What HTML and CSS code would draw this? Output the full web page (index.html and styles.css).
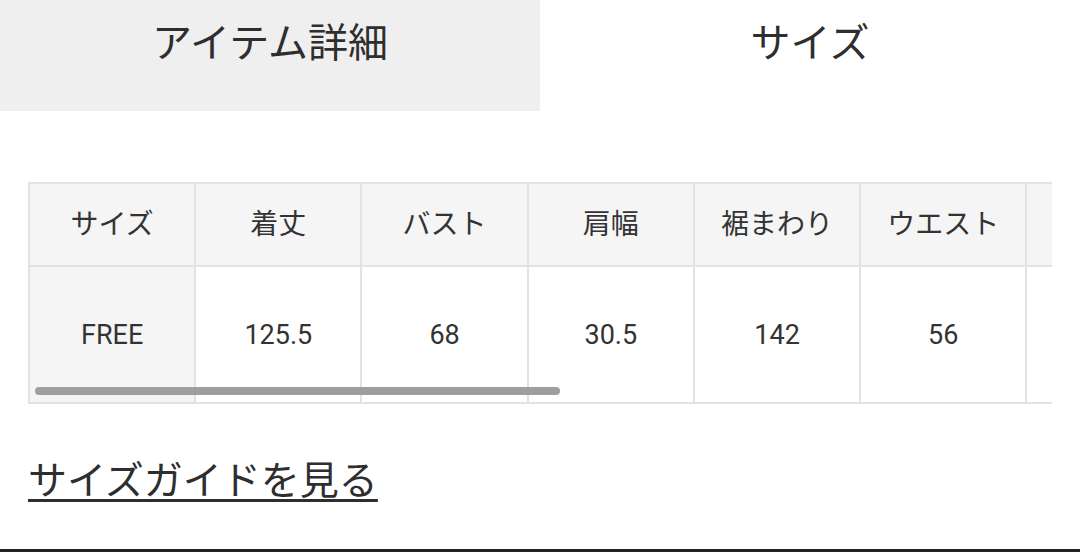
FILE: index.html
```html
<!DOCTYPE html>
<html lang="ja">
<head>
<meta charset="utf-8">
<link rel="stylesheet" href="styles.css">
</head>
<body>
<div class="page">
  <div class="tabs">
    <div class="tab tab-inactive">アイテム詳細</div>
    <div class="tab tab-active">サイズ</div>
  </div>
  <div class="content">
    <div class="table-wrap">
      <div class="scroller">
        <table class="size-table">
          <thead>
            <tr>
              <th class="first">サイズ</th>
              <th>着丈</th>
              <th>バスト</th>
              <th>肩幅</th>
              <th>裾まわり</th>
              <th>ウエスト</th>
              <th>&nbsp;</th>
              <th>&nbsp;</th>
            </tr>
          </thead>
          <tbody>
            <tr>
              <td class="first">FREE</td>
              <td>125.5</td>
              <td>68</td>
              <td>30.5</td>
              <td>142</td>
              <td>56</td>
              <td>&nbsp;</td>
              <td>&nbsp;</td>
            </tr>
          </tbody>
        </table>
      </div>
      <div class="scrollbar"></div>
    </div>
    <a class="guide-link" href="#">サイズガイドを見る</a>
  </div>
  <div class="bottom-line"></div>
</div>
</body>
</html>
```

FILE: styles.css
```css
* { box-sizing: border-box; }
html, body {
  margin: 0;
  padding: 0;
  background: #ffffff;
}
body {
  font-family: "Noto Sans CJK JP", "Noto Sans", sans-serif;
  color: #333333;
  width: 1080px;
  height: 552px;
  overflow: hidden;
}
.page {
  width: 1080px;
  height: 552px;
  display: flex;
  flex-direction: column;
}
.tabs {
  display: flex;
  height: 111px;
  flex: none;
}
.tab {
  width: 540px;
  display: flex;
  align-items: flex-start;
  justify-content: center;
  padding-top: 14px;
  font-size: 40px;
  line-height: 52px;
  color: #2e2e2e;
}
.tab-inactive { background: #efefef; }
.tab-active { background: #ffffff; }
.content {
  flex: 1;
  padding: 71px 28px 0 28px;
}
.table-wrap {
  position: relative;
  width: 1024px;
}
.scroller {
  width: 1024px;
  overflow: hidden;
}
.size-table {
  border-collapse: collapse;
  table-layout: fixed;
  width: 1332px;
}
.size-table th,
.size-table td {
  width: 166px;
  border: 2px solid #e2e2e2;
  text-align: center;
  font-weight: 400;
  color: #333333;
  padding: 0;
}
.size-table th {
  background: #f5f5f5;
  height: 83px;
  font-size: 28px;
  padding-bottom: 6px;
}
.size-table td {
  height: 137px;
  font-family: "Roboto", "Noto Sans CJK JP", sans-serif;
  font-size: 27px;
  padding-bottom: 0;
}
.size-table td.first {
  background: #f5f5f5;
}
.scrollbar {
  position: absolute;
  left: 7px;
  top: 205px;
  width: 525px;
  height: 8px;
  border-radius: 4px;
  background: #9e9e9e;
}
.guide-link {
  display: inline-block;
  margin-top: 49px;
  font-size: 39px;
  line-height: 48px;
  color: #2e2e2e;
  text-decoration: underline;
  text-decoration-thickness: 3px;
  text-underline-offset: 5px;
}
.bottom-line {
  height: 3px;
  background: #222222;
  flex: none;
}
```
